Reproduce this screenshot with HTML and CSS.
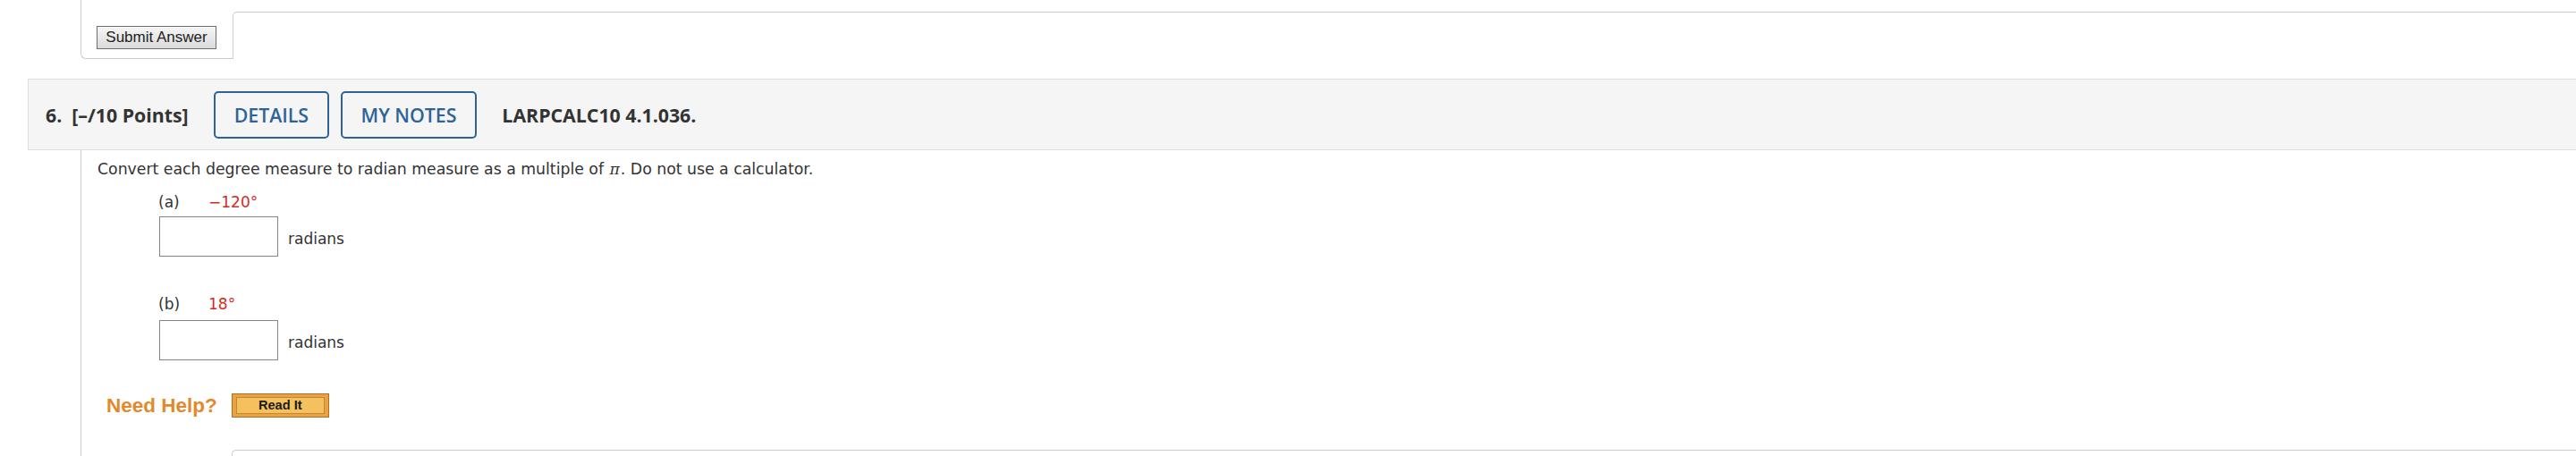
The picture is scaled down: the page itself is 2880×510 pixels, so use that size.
FILE: index.html
```html
<!DOCTYPE html>
<html lang="en">
<head>
<meta charset="utf-8">
<title>Question 6</title>
<link rel="stylesheet" href="styles.css">
</head>
<body>
<div class="prev">
  <div class="prev-tab"><button class="submit" type="button">Submit Answer</button></div>
  <div class="prev-side"></div>
</div>

<div class="question">
  <div class="qhead">
    <span class="qnum">6.&nbsp; [–/10 Points]</span>
    <button class="hbtn first" type="button">DETAILS</button>
    <button class="hbtn" type="button">MY NOTES</button>
    <span class="qcode">LARPCALC10 4.1.036.</span>
  </div>
  <div class="qbody">
    <p class="prompt">Convert each degree measure to radian measure as a multiple of <i class="pi">π</i>. Do not use a calculator.</p>
    <div class="part"><span class="lbl">(a)</span><span class="val">−120°</span></div>
    <div class="ans"><span class="box"></span><span class="unit">radians</span></div>
    <div class="part part-b"><span class="lbl">(b)</span><span class="val">18°</span></div>
    <div class="ans ans-b"><span class="box"></span><span class="unit">radians</span></div>
    <div class="help"><span class="need">Need Help?</span><button class="readit" type="button"><span>Read It</span></button></div>
    <div class="next"></div>
  </div>
</div>
</body>
</html>
```

FILE: styles.css
```css
html, body {
  margin: 0;
  padding: 0;
  background: #ffffff;
  overflow: hidden;
}

.prev {
  display: flex;
  align-items: flex-start;
  margin-left: 90px;
}

.prev-tab {
  box-sizing: border-box;
  width: 170px;
  height: 66px;
  border-left: 1px solid #cccccc;
  border-bottom: 1px solid #cccccc;
  border-bottom-left-radius: 6px;
  padding: 29px 0 0 17px;
}

.prev-side {
  flex: 1;
  box-sizing: border-box;
  height: 53px;
  margin-top: 13px;
  border-top: 1px solid #cccccc;
  border-left: 1px solid #cccccc;
  border-top-left-radius: 5px;
}

.submit {
  box-sizing: border-box;
  height: 26px;
  width: 134px;
  padding: 0;
  margin: 0;
  border: 1px solid #6e6e6e;
  border-radius: 0;
  background: linear-gradient(#f6f6f6, #dadada);
  font-family: "Liberation Sans", Arial, sans-serif;
  font-size: 17px;
  color: #222222;
  line-height: 24px;
}

.qhead {
  box-sizing: border-box;
  height: 80px;
  margin: 22px 0 0 31px;
  padding-left: 19px;
  border: 1px solid #dddddd;
  border-right: none;
  background: #f5f5f5;
  display: flex;
  align-items: center;
  font-family: "Open Sans", sans-serif;
  font-size: 21.3px;
  color: #333333;
}

.qnum {
  font-weight: 700;
}

.hbtn {
  box-sizing: border-box;
  height: 53px;
  margin: 0 0 0 12.5px;
  padding: 0 21px;
  border: 2px solid #2e6398;
  border-radius: 5px;
  background: transparent;
  font-family: "Open Sans", sans-serif;
  font-size: 21.3px;
  font-weight: 600;
  color: #2e6398;
}

.hbtn.first {
  margin-left: 28px;
}

.qcode {
  margin-left: 28px;
  font-weight: 700;
}

.qbody {
  margin-left: 90px;
  border-left: 1px solid #cccccc;
  padding: 11px 0 0 18px;
  font-family: "DejaVu Sans", Verdana, sans-serif;
  font-size: 17px;
  color: #333333;
  height: 400px;
}

.prompt {
  margin: 0;
  font-size: 17.3px;
  line-height: 20px;
}

.pi {
  font-family: "DejaVu Serif", "Liberation Serif", serif;
  font-style: italic;
  margin: 0 1px;
}

.part {
  display: flex;
  margin-top: 17px;
  padding-left: 68px;
  line-height: 20px;
}

.part-b {
  margin-top: 43px;
}

.lbl {
  width: 56px;
}

.val {
  color: #d22d1f;
}

.ans {
  display: flex;
  align-items: center;
  margin-top: 6px;
  padding-left: 69px;
}

.ans-b {
  margin-top: 8px;
}

.box {
  box-sizing: border-box;
  width: 133px;
  height: 45px;
  border: 1px solid #858585;
  background: #ffffff;
}

.unit {
  margin: 4px 0 0 11px;
  line-height: 20px;
}

.help {
  display: flex;
  align-items: center;
  margin-top: 37px;
  padding-left: 10px;
}

.need {
  font-family: "Liberation Sans", Arial, sans-serif;
  font-size: 22.5px;
  font-weight: 700;
  color: #e3892c;
}

.readit {
  box-sizing: border-box;
  width: 109px;
  height: 27px;
  margin: 0 0 0 16px;
  padding: 3px 4px;
  border: 1px solid #a9712f;
  border-radius: 0;
  background: #eca23d;
}

.readit span {
  display: block;
  box-sizing: border-box;
  height: 19px;
  border: 1px solid #c2863b;
  background: #f5c15e;
  font-family: "Liberation Sans", Arial, sans-serif;
  font-size: 14.6px;
  font-weight: 700;
  line-height: 17px;
  color: #1a1a1a;
  text-align: center;
}

.next {
  box-sizing: border-box;
  height: 20px;
  margin: 36px 0 0 150px;
  border-top: 1px solid #cccccc;
  border-left: 1px solid #cccccc;
  border-top-left-radius: 5px;
}
```
